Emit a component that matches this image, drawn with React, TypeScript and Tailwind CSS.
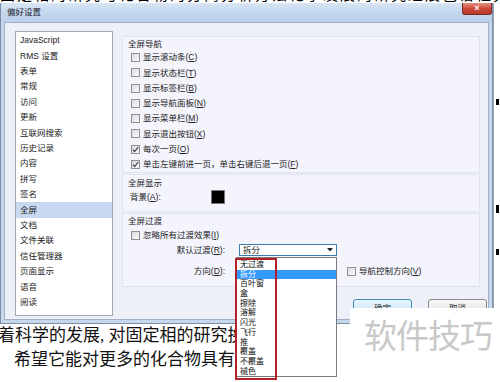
import React from "react";

const ui = { fontFamily: '"Liberation Sans", "Noto Sans CJK SC", sans-serif' };

function Box({ checked }: { checked?: boolean }) {
  return (
    <span className="flex h-[9px] w-[9px] shrink-0 items-center justify-center border border-[#8e9096] bg-gradient-to-br from-[#d9dadd] to-[#fbfbfb]">
      {checked && (
        <svg width="7" height="7" viewBox="0 0 7 7">
          <path d="M0.8 3.6 L2.7 5.6 L6.2 1" fill="none" stroke="#3a3f4a" strokeWidth="1.2" />
        </svg>
      )}
    </span>
  );
}

function Label({ t, k }: { t: string; k: string }) {
  return (
    <span className="whitespace-nowrap">
      {t}(<u>{k}</u>)
    </span>
  );
}

export default function App() {
  const list = [
    "JavaScript",
    "RMS 设置",
    "表单",
    "常规",
    "访问",
    "更新",
    "互联网搜索",
    "历史记录",
    "内容",
    "拼写",
    "签名",
    "全屏",
    "文档",
    "文件关联",
    "信任管理器",
    "页面显示",
    "语音",
    "阅读",
  ];
  const nav: [string, string, boolean][] = [
    ["显示滚动条", "C", false],
    ["显示状态栏", "T", false],
    ["显示标签栏", "B", false],
    ["显示导航面板", "N", false],
    ["显示菜单栏", "M", false],
    ["显示退出按钮", "X", false],
    ["每次一页", "O", true],
    ["单击左键前进一页，单击右键后退一页", "F", true],
  ];
  const drop = ["无过渡", "拆分", "百叶窗", "盒", "擦除", "溶解", "闪光", "飞行", "推", "覆盖", "不覆盖", "褪色"];

  return (
    <div className="relative h-[382px] w-[500px] overflow-hidden bg-white" style={ui}>
      {/* document text peeking above */}
      <div className="h-[3px] overflow-hidden">
        <div
          className="-mt-[12px] whitespace-nowrap text-[15px] leading-[15px] tracking-[2px] text-black"
          style={{ fontFamily: '"Liberation Serif", "Noto Sans CJK SC", serif' }}
        >
          固定相的研究与化合物的分离分析方法化学发展的研究进展色谱柱分析
        </div>
      </div>

      <div className="flex">
        {/* dialog window */}
        <div className="flex h-[321px] w-[493px] flex-col border-x border-b border-[#7d8ea6] bg-[#c6d8ee]">
          <div className="flex h-[19px] bg-gradient-to-b from-[#d9e6f4] via-[#c3d7ee] to-[#bcd1ea]">
            <span className="pl-[6px] pt-[4px] text-[8.5px] leading-[11px] text-[#1c2430]">偏好设置</span>
            <span className="ml-auto mr-[0px] flex h-[12px] w-[30px] items-center justify-center rounded-b-[3px] border border-t-0 border-[#7b2b25] bg-gradient-to-b from-[#e39080] via-[#cd4a3c] to-[#b8382c] text-[9px] font-bold leading-none text-white">
              ×
            </span>
          </div>
          <div className="flex flex-1 px-[3px] pb-[3px]">
            <div className="flex flex-1 border border-[#9fb0c6] bg-[#eef0f9]">
              {/* left list */}
              <div className="ml-[10px] mt-[8px] h-[285px] w-[98px] border border-[#a3a9b3] bg-white pt-[1px] text-[8.5px] text-[#222]">
                {list.map((s) => (
                  <div
                    key={s}
                    className={`flex h-[15.4px] items-center pl-[4px] ${s === "全屏" ? "bg-[#c8d8f1]" : ""}`}
                  >
                    {s}
                  </div>
                ))}
              </div>

              {/* right column */}
              <div className="ml-[9px] mt-[13px] flex w-[366px] flex-col text-[8.5px] text-[#222]">
                {/* group 1 */}
                <div className="flex h-[137px] w-[358px] flex-col border border-[#e0e3ef] bg-[#f3f4fc] pt-[1px]">
                  <div className="ml-[5px] h-[12px] leading-[12px]">全屏导航</div>
                  {nav.map(([t, k, c]) => (
                    <div key={t} className="ml-[8px] flex h-[15.3px] items-center gap-[3px]">
                      <Box checked={c} />
                      <Label t={t} k={k} />
                    </div>
                  ))}
                </div>

                {/* group 2 */}
                <div className="mt-[1px] flex h-[38px] w-[358px] flex-col border border-[#e0e3ef] bg-[#f3f4fc] pt-[2px]">
                  <div className="ml-[5px] h-[12px] leading-[12px]">全屏显示</div>
                  <div className="ml-[7px] flex h-[16px] items-center">
                    <span className="w-[81px]">
                      <Label t="背景" k="A" />:
                    </span>
                    <span className="h-[14px] w-[14px] border border-[#777] bg-black" />
                  </div>
                </div>

                {/* group 3 */}
                <div className="mt-[1px] flex h-[74px] w-[358px] flex-col border border-[#e0e3ef] bg-[#f3f4fc] pt-[1px]">
                  <div className="ml-[5px] h-[13px] leading-[13px]">全屏过渡</div>
                  <div className="ml-[8px] flex h-[15px] items-center gap-[3px]">
                    <Box />
                    <Label t="忽略所有过渡效果" k="I" />
                  </div>
                  <div className="flex h-[14px] items-center">
                    <span className="w-[102px] text-right">
                      <Label t="默认过渡" k="R" />:
                    </span>
                    <div className="ml-[14px] flex h-[12px] w-[98px] items-center justify-between border border-[#3d7bad] bg-white pl-[3px] pr-[3px]">
                      <span>拆分</span>
                      <svg width="6" height="4" viewBox="0 0 6 4">
                        <path d="M0 0 H6 L3 3.5 Z" fill="#222" />
                      </svg>
                    </div>
                  </div>
                  <div className="mt-[7px] flex h-[14px] items-center">
                    <span className="w-[102px] text-right">
                      <Label t="方向" k="D" />:
                    </span>
                    <div className="ml-[14px] h-[12px] w-[98px] border border-[#a0a4ab] bg-white" />
                    <div className="ml-[10px] flex items-center gap-[3px]">
                      <Box />
                      <Label t="导航控制方向" k="V" />
                    </div>
                  </div>
                </div>

                {/* buttons */}
                <div className="ml-[231px] mt-[12px] flex gap-[16px]">
                  <div className="flex h-[19px] w-[59px] justify-center rounded-[3px] border border-[#3c8cb5] bg-gradient-to-b from-[#eaf6fd] to-[#bfe3f6] pt-[3px] leading-[10px]">
                    确定
                  </div>
                  <div className="flex h-[19px] w-[59px] justify-center rounded-[3px] border border-[#8b8b8b] bg-gradient-to-b from-[#f7f7f7] to-[#dcdcdc] pt-[3px] leading-[10px]">
                    取消
                  </div>
                </div>
              </div>
            </div>
          </div>
        </div>

        {/* right strip of document behind */}
        <div className="flex flex-1 flex-col border-l border-[#9aa6b4] bg-white pt-[96px]">
          <div className="ml-[2px] h-[6px] w-[3px] bg-black" />
          <div className="ml-[2px] mt-[100px] h-[8px] w-[3px] bg-black" />
          <div className="ml-[2px] mt-[36px] h-[6px] w-[3px] bg-black" />
        </div>
      </div>

      {/* document text below */}
      <div
        className="text-[17px] leading-[24px] text-[#111]"
        style={{ fontFamily: '"Liberation Serif", "Noto Sans CJK SC", serif' }}
      >
        <div className="-ml-[2px] whitespace-nowrap">着科学的发展, 对固定相的研究换</div>
        <div className="whitespace-nowrap pl-[14px]">希望它能对更多的化合物具有异</div>
      </div>

      {/* open dropdown list */}
      <div className="absolute left-[236px] top-[257px] h-[120px] w-[101px] border border-[#7a7a7a] bg-white pt-[2px] text-[8px] text-[#111]">
        {drop.map((d) => (
          <div
            key={d}
            className={`h-[9.7px] pl-[3px] leading-[9.7px] ${d === "拆分" ? "bg-[#3399ff] text-white" : ""}`}
          >
            {d}
          </div>
        ))}
      </div>

      {/* red annotation */}
      <div className="absolute left-[235px] top-[258px] h-[122px] w-[42px] border-2 border-[#b3202a]" />

      {/* watermark */}
      <div className="absolute left-[350px] top-[308px] h-[74px] w-[150px] bg-white pl-[14px] pt-[9px]">
        <div className="text-[33px] leading-[40px] tracking-[-1px] text-[#c8c8c8]">软件技巧</div>
      </div>
    </div>
  );
}
